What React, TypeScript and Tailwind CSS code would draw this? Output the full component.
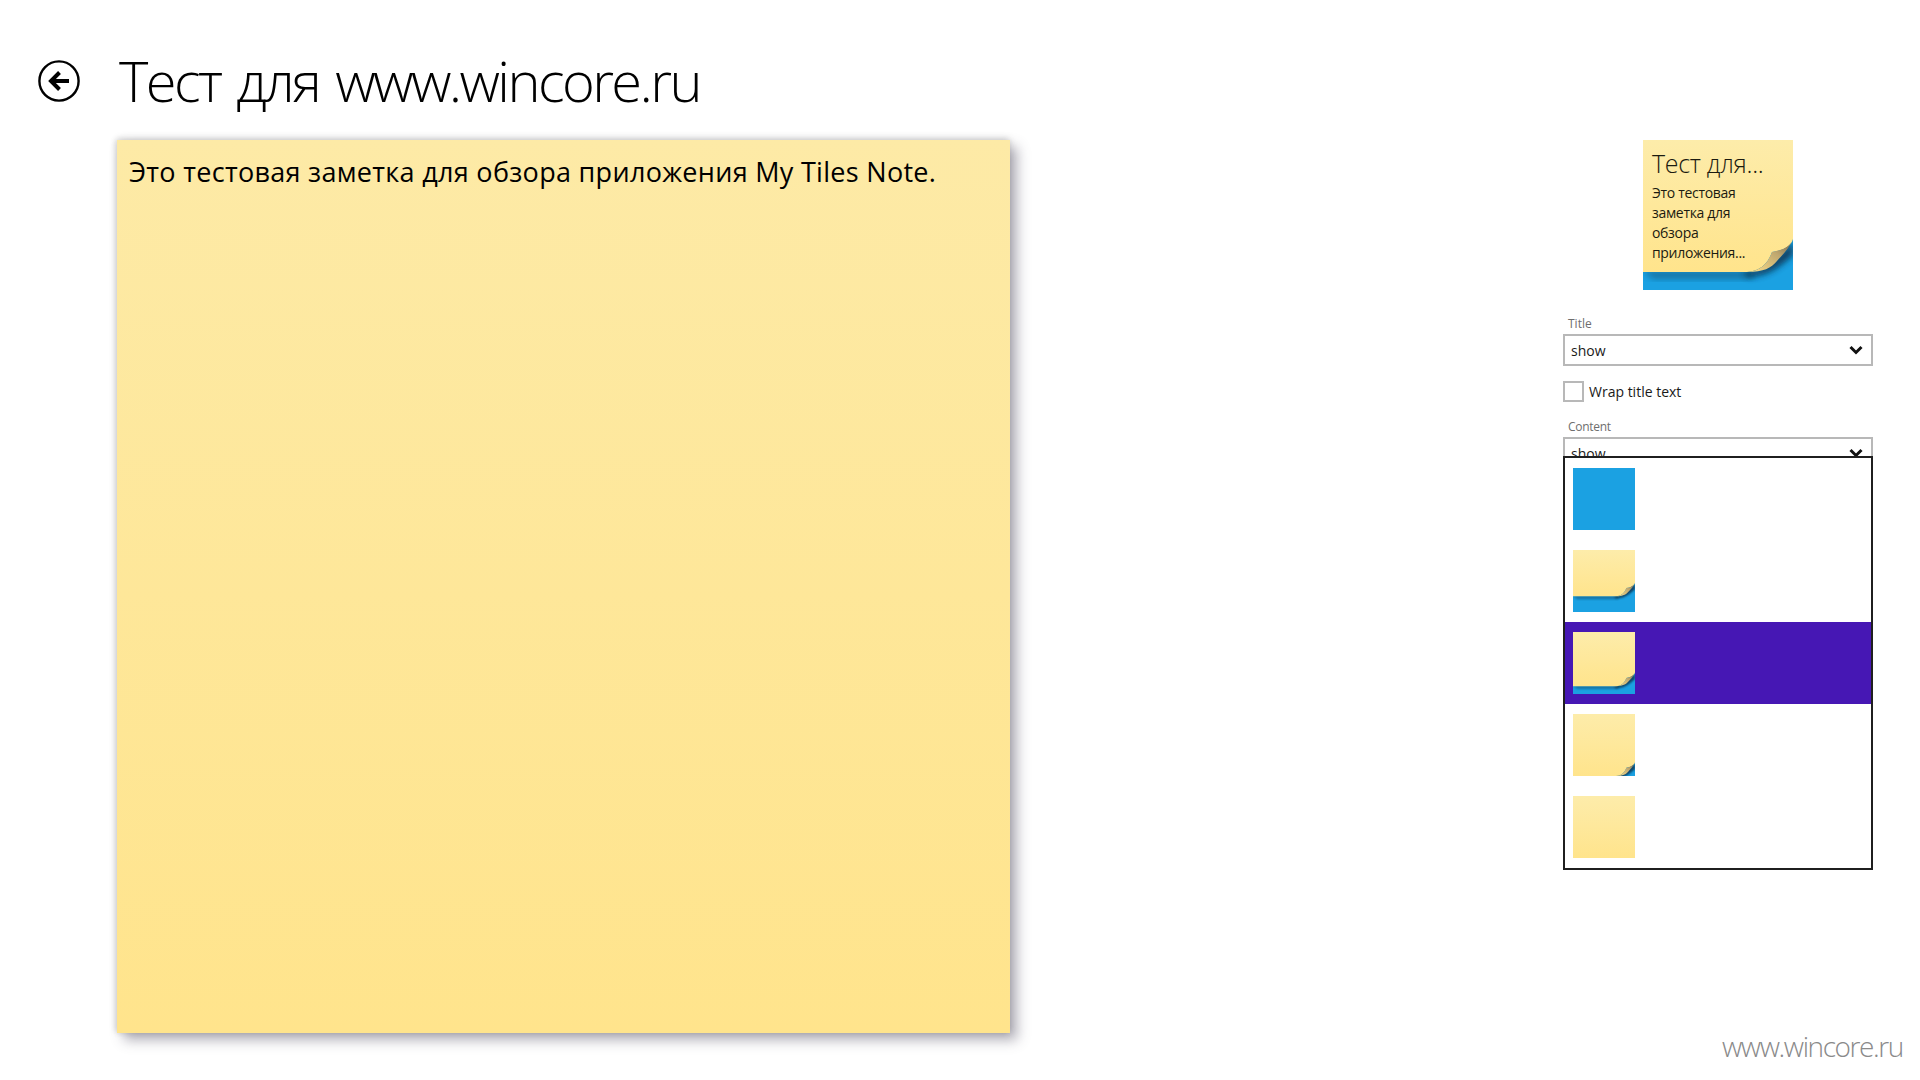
function Sticky({ bottom, id, className }: { bottom: number | null; id: string; className: string }) {
  if (bottom === null) {
    return <div className={"bg-gradient-to-b from-[#fdecaa] to-[#ffe48c] " + className} />;
  }
  const B = bottom;
  const paper = `M0 0H150V${B - 33}C148 ${B - 25} 140 ${B - 22} 129 ${B - 20}C125 ${B - 9} 118 ${B - 1} 104 ${B}H0Z`;
  const fold = `M150 ${B - 33}C147 ${B - 25} 140 ${B - 22} 129 ${B - 20}C125 ${B - 9} 118 ${B - 1} 104 ${B}C121 ${B} 128 ${B - 4} 134 ${B - 11}C139 ${B - 17} 146 ${B - 23} 150 ${B - 33}Z`;
  const band = `M0 ${B - 1}H110V${B + 7}H10Z`;
  const curl = `M100 ${B}C122 ${B} 134 ${B - 16} 150 ${B - 30}V${B - 17}C140 ${B - 9} 128 ${B + 5} 104 ${B + 5}Z`;
  return (
    <svg viewBox="0 0 150 150" className={className} preserveAspectRatio="none">
      <defs>
        <linearGradient id={id + "p"} x1="0" y1="0" x2="0" y2="1">
          <stop offset="0" stopColor="#fdecaa" />
          <stop offset="1" stopColor="#ffe48c" />
        </linearGradient>
        <linearGradient id={id + "f"} x1="1" y1="0" x2="0" y2="1">
          <stop offset="0" stopColor="#6f5f48" />
          <stop offset="0.4" stopColor="#bfa76f" />
          <stop offset="1" stopColor="#fde08a" />
        </linearGradient>
        <filter id={id + "b"} x="-20%" y="-30%" width="140%" height="160%">
          <feGaussianBlur stdDeviation="3" />
        </filter>
      </defs>
      <rect width="150" height="150" fill="#1ba1e2" />
      <path d={band} fill="#0a3550" opacity="0.42" filter={`url(#${id}b)`} />
      <path d={curl} fill="#07283f" opacity="0.8" filter={`url(#${id}b)`} />
      <path d={paper} fill={`url(#${id}p)`} />
      <path d={fold} fill={`url(#${id}f)`} />
    </svg>
  );
}

function Chevron() {
  return (
    <svg viewBox="0 0 14 10" className="w-[14px] h-[10px]">
      <path d="M1.5 2 7 7.5 12.5 2" fill="none" stroke="#111" strokeWidth="3" />
    </svg>
  );
}

function SelectBox({ value }: { value: string }) {
  return (
    <div className="h-[32px] border-2 border-[#b8b8b8] flex items-center justify-between pl-[6px] pr-[8px] text-[14px] text-[#1a1a1a]">
      <span>{value}</span>
      <Chevron />
    </div>
  );
}

const items: { bottom: number | null; selected?: boolean; blue?: boolean }[] = [
  { bottom: null, blue: true },
  { bottom: 112 },
  { bottom: 131, selected: true },
  { bottom: 150 },
  { bottom: null },
];

export default function App() {
  return (
    <div className="relative w-[1920px] h-[1080px] overflow-hidden bg-white font-['Open_Sans',sans-serif] text-black">
      <header className="flex items-center h-[140px] pl-[38px] pt-[21px]">
        <svg viewBox="0 0 42 42" className="w-[42px] h-[42px] mr-[39px] shrink-0">
          <circle cx="21" cy="21" r="19.6" fill="none" stroke="#000" strokeWidth="2.4" />
          <path d="M31 21H14M21.5 12.5 13 21l8.5 8.5" fill="none" stroke="#000" strokeWidth="4" />
        </svg>
        <h1 className="text-[56px] font-light leading-none tracking-[-2.6px] [word-spacing:4px] whitespace-nowrap mb-[2px]">Тест для www.wincore.ru</h1>
      </header>

      <main className="flex items-start pl-[117px] pr-[47px]">
        <section className="w-[893px] h-[893px] bg-gradient-to-b from-[#fdeaa6] to-[#ffe48c] shadow-[7px_7px_12px_rgba(70,65,85,0.42),0_-2px_7px_rgba(0,0,0,0.12),-2px_0_6px_rgba(0,0,0,0.1)] pl-[12px] pt-[14px]">
          <p className="text-[27px] leading-[36px] tracking-[0.3px]">Это тестовая заметка для обзора приложения My Tiles Note.</p>
        </section>

        <aside className="ml-auto w-[310px] relative">
          <div className="flex justify-center">
            <div className="relative w-[150px] h-[150px]">
              <Sticky bottom={132} id="tile" className="w-[150px] h-[150px] block" />
              <div className="absolute left-[9px] top-[7px] right-0 text-[#1b1b10]">
                <div className="text-[25px] font-light leading-[32px] tracking-[-0.3px]">Тест для...</div>
                <div className="text-[14px] leading-[20px] tracking-[-0.32px] mt-[4px]">
                  Это тестовая<br />заметка для<br />обзора<br />приложения...
                </div>
              </div>
            </div>
          </div>

          <div className="mt-[26px] pl-[5px] text-[12px] leading-[16px] text-[#6e6e6e]">Title</div>
          <div className="mt-[2px]"><SelectBox value="show" /></div>

          <label className="flex items-center h-[21px] mt-[15px] text-[14px] text-[#1a1a1a]">
            <span className="w-[21px] h-[21px] border-2 border-[#b8b8b8] mr-[5px]" />
            Wrap title text
          </label>

          <div className="mt-[17px] pl-[5px] text-[12px] leading-[16px] tracking-[-0.3px] text-[#6e6e6e]">Content</div>
          <div className="mt-[2px]"><SelectBox value="show" /></div>

          <div className="absolute left-0 top-[316px] w-[310px] h-[414px] border-2 border-[#1f1f1f] bg-white">
            {items.map((it, i) => (
              <div key={i} className={"h-[82px] flex items-center pl-[8px] " + (it.selected ? "bg-[#4617b4]" : "")}>
                {it.blue ? (
                  <div className="w-[62px] h-[62px] bg-[#1ba1e2]" />
                ) : (
                  <Sticky bottom={it.bottom} id={"t" + i} className="w-[62px] h-[62px] block" />
                )}
              </div>
            ))}
          </div>
        </aside>
      </main>

      <div className="absolute right-[17px] top-[1028px] text-[28px] font-light leading-[36px] tracking-[-1.4px] text-[#8a8a8a]">www.wincore.ru</div>
    </div>
  );
}
